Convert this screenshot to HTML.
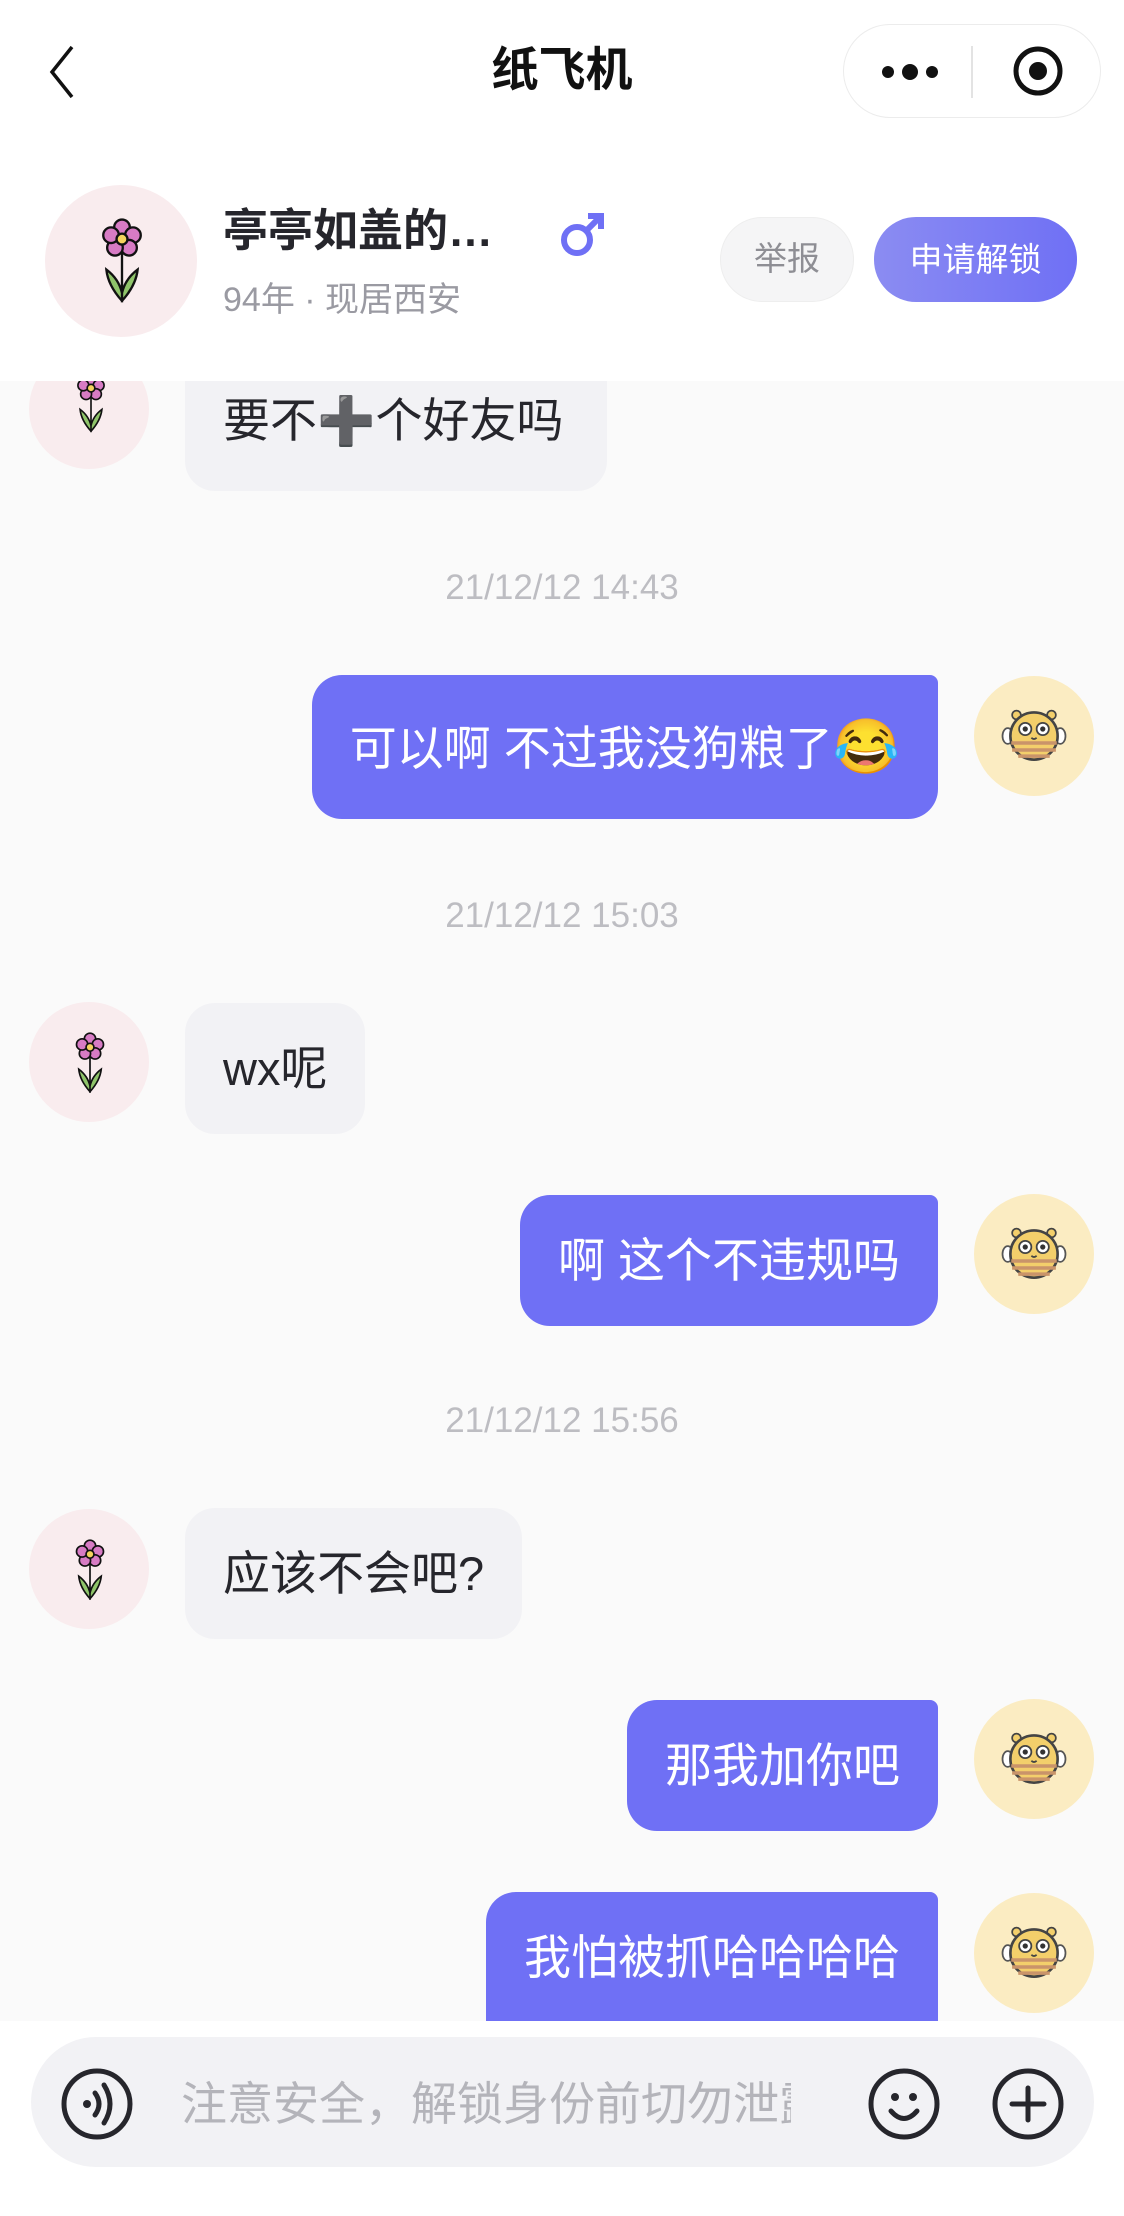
<!DOCTYPE html>
<html><head><meta charset="utf-8"><style>
*{margin:0;padding:0;box-sizing:border-box}
body{width:1124px;height:2216px;position:relative;background:#fff;font-family:"Liberation Sans","Noto Sans CJK SC",sans-serif;overflow:hidden}
.a{position:absolute}
.chat{position:absolute;left:0;top:381px;width:1124px;height:1640px;background:#fafafa}
.bub{position:absolute;height:131px;border-radius:30px;font-size:47px;line-height:131px;padding:0 38px;white-space:nowrap}
.l{background:#f2f2f5;color:#26262c;left:185px}
.r{background:#6f70f5;color:#fff;right:186px;border-top-right-radius:8px}
.ts{position:absolute;left:0;width:1124px;text-align:center;font-size:35px;color:#bdbdc2}
.av{position:absolute;width:120px;height:120px;border-radius:60px}
.fl{background:#f9ecee;left:29px}
.be{background:#fbecc2;left:974px}
</style></head><body>
<svg class="a" style="left:46px;top:44px" width="32" height="56" viewBox="0 0 32 56"><path d="M26 3 L6 28 L26 53" fill="none" stroke="#111" stroke-width="3.5"/></svg>
<div class="a" style="left:0;width:1124px;top:42px;text-align:center;font-size:47px;font-weight:bold;color:#111;line-height:56px">纸飞机</div>
<div class="a" style="left:843px;top:24px;width:258px;height:94px;border:1.5px solid #ececec;border-radius:47px"></div>
<div class="a" style="left:971px;top:46px;width:2px;height:52px;background:#e3e3e3"></div>
<svg class="a" style="left:880px;top:60px" width="60" height="24"><circle cx="8" cy="12" r="6" fill="#111"/><circle cx="30" cy="12" r="8" fill="#111"/><circle cx="52" cy="12" r="6" fill="#111"/></svg>
<svg class="a" style="left:1012px;top:44px" width="52" height="54"><circle cx="26" cy="27" r="22" fill="none" stroke="#111" stroke-width="5"/><circle cx="26" cy="27" r="9" fill="#111"/></svg>

<div class="a" style="left:45px;top:185px;width:152px;height:152px;border-radius:76px;background:#f9ecee"></div>
<svg class="a" style="left:97px;top:218px" width="50" height="86" viewBox="0 0 64 110" preserveAspectRatio="none">
<path d="M32 40 L32 108 M32 106 Q14 86 12 66 Q28 78 32 96 M32 106 Q50 86 52 66 Q36 78 32 96" fill="#8fc46a" stroke="#111" stroke-width="3"/>
<g fill="#d77bc4" stroke="#111" stroke-width="3"><circle cx="32" cy="12" r="10"/><circle cx="46" cy="22" r="10"/><circle cx="41" cy="38" r="10"/><circle cx="23" cy="38" r="10"/><circle cx="18" cy="22" r="10"/></g>
<circle cx="32" cy="27" r="7" fill="#f4d45e" stroke="#111" stroke-width="3"/></svg>
<div class="a" style="left:223px;top:201px;font-size:45px;font-weight:bold;color:#26262c;line-height:60px">亭亭如盖的…</div>
<svg class="a" style="left:558px;top:210px" width="48" height="48"><circle cx="19" cy="30" r="13" fill="none" stroke="#6f70f5" stroke-width="6"/><path d="M28 21 L42 7 M30 6 L43 6 L43 19" fill="none" stroke="#6f70f5" stroke-width="6"/></svg>
<div class="a" style="left:223px;top:279px;font-size:34px;color:#9a9aa2;line-height:42px">94年 · 现居西安</div>
<div class="a" style="left:720px;top:217px;width:134px;height:85px;border-radius:42px;background:#f5f5f6;border:1.5px solid #eee;font-size:33px;color:#8e8e94;text-align:center;line-height:82px">举报</div>
<div class="a" style="left:874px;top:217px;width:203px;height:85px;border-radius:42px;background:linear-gradient(90deg,#8b8cf2,#6f70f5);font-size:33px;color:#fff;text-align:center;line-height:85px">申请解锁</div>

<div class="chat"></div>
<svg width="0" height="0" style="position:absolute"><defs>
<g id="flower"><path d="M32 40 L32 108 M32 106 Q14 86 12 66 Q28 78 32 96 M32 106 Q50 86 52 66 Q36 78 32 96" fill="#8fc46a" stroke="#111" stroke-width="3"/>
<g fill="#d77bc4" stroke="#111" stroke-width="3"><circle cx="32" cy="12" r="10"/><circle cx="46" cy="22" r="10"/><circle cx="41" cy="38" r="10"/><circle cx="23" cy="38" r="10"/><circle cx="18" cy="22" r="10"/></g>
<circle cx="32" cy="27" r="7" fill="#f4d45e" stroke="#111" stroke-width="3"/></g>
<g id="bee"><ellipse cx="10" cy="40" rx="6" ry="9" fill="#fff" stroke="#555" stroke-width="2"/><ellipse cx="70" cy="40" rx="6" ry="9" fill="#fff" stroke="#555" stroke-width="2"/>
<circle cx="20" cy="16" r="5" fill="#f3cf6b" stroke="#444" stroke-width="2"/><circle cx="60" cy="16" r="5" fill="#f3cf6b" stroke="#444" stroke-width="2"/>
<circle cx="40" cy="40" r="27" fill="#f3cf6b" stroke="#444" stroke-width="3"/><path d="M14 48 H66 M15 56 H65 M22 63 H58" stroke="#c9946a" stroke-width="4"/>
<circle cx="30" cy="32" r="7" fill="#fff" stroke="#444" stroke-width="2"/><circle cx="50" cy="32" r="7" fill="#fff" stroke="#444" stroke-width="2"/><circle cx="30" cy="32" r="3" fill="#333"/><circle cx="50" cy="32" r="3" fill="#333"/><path d="M37 42 Q40 45 43 42" stroke="#444" stroke-width="2" fill="none"/></g>
</defs></svg>

<div class="av fl" style="top:349px;clip-path:inset(32px 0 0 0)"></div>
<svg class="a" style="left:72px;top:381px" width="38" height="60" viewBox="0 14 64 110"><use href="#flower"/></svg>
<div class="bub l" style="top:381px;border-top-left-radius:0;border-top-right-radius:0;height:110px;line-height:80px;width:422px">要不➕个好友吗</div>

<div class="ts" style="top:568px">21/12/12 14:43</div>
<div class="bub r" style="top:675px;height:144px;line-height:144px">可以啊 不过我没狗粮了<span style="font-size:54px">😂</span></div>
<div class="av be" style="top:676px"></div><svg class="a" style="left:999px;top:701px" width="70" height="70" viewBox="0 0 80 80"><use href="#bee"/></svg>

<div class="ts" style="top:896px">21/12/12 15:03</div>
<div class="av fl" style="top:1002px"></div><svg class="a" style="left:72px;top:1032px" width="36" height="62" viewBox="0 0 64 110"><use href="#flower"/></svg>
<div class="bub l" style="top:1003px">wx呢</div>

<div class="bub r" style="top:1195px">啊 这个不违规吗</div>
<div class="av be" style="top:1194px"></div><svg class="a" style="left:999px;top:1219px" width="70" height="70" viewBox="0 0 80 80"><use href="#bee"/></svg>

<div class="ts" style="top:1401px">21/12/12 15:56</div>
<div class="av fl" style="top:1509px"></div><svg class="a" style="left:72px;top:1539px" width="36" height="62" viewBox="0 0 64 110"><use href="#flower"/></svg>
<div class="bub l" style="top:1508px">应该不会吧?</div>

<div class="bub r" style="top:1700px">那我加你吧</div>
<div class="av be" style="top:1699px"></div><svg class="a" style="left:999px;top:1724px" width="70" height="70" viewBox="0 0 80 80"><use href="#bee"/></svg>

<div class="bub r" style="top:1892px;height:129px;border-bottom-left-radius:0;border-bottom-right-radius:0">我怕被抓哈哈哈哈</div>
<div class="av be" style="top:1893px"></div><svg class="a" style="left:999px;top:1918px" width="70" height="70" viewBox="0 0 80 80"><use href="#bee"/></svg>

<div class="a" style="left:0;top:2021px;width:1124px;height:195px;background:#fff"></div>
<div class="a" style="left:31px;top:2037px;width:1063px;height:130px;border-radius:65px;background:#f2f2f5"></div>
<svg class="a" style="left:60px;top:2066px" width="74" height="76"><circle cx="37" cy="38" r="33" fill="none" stroke="#26262c" stroke-width="5"/><circle cx="27" cy="38" r="4" fill="#26262c"/><path d="M35 27 Q43 38 35 49 M44 19 Q56 38 44 57" fill="none" stroke="#26262c" stroke-width="5" stroke-linecap="round"/></svg>
<div class="a" style="left:181px;top:2076px;width:610px;overflow:hidden;white-space:nowrap;font-size:46px;color:#b4b4ba;line-height:56px">注意安全，解锁身份前切勿泄露</div>
<svg class="a" style="left:867px;top:2066px" width="74" height="76"><circle cx="37" cy="38" r="33" fill="none" stroke="#26262c" stroke-width="5"/><circle cx="28" cy="31" r="4" fill="#26262c"/><circle cx="46" cy="31" r="4" fill="#26262c"/><path d="M24 45 Q37 60 50 45" fill="none" stroke="#26262c" stroke-width="5" stroke-linecap="round"/></svg>
<svg class="a" style="left:991px;top:2066px" width="74" height="76"><circle cx="37" cy="38" r="33" fill="none" stroke="#26262c" stroke-width="5"/><path d="M37 22 V54 M21 38 H53" stroke="#26262c" stroke-width="5" stroke-linecap="round"/></svg>
</body></html>
